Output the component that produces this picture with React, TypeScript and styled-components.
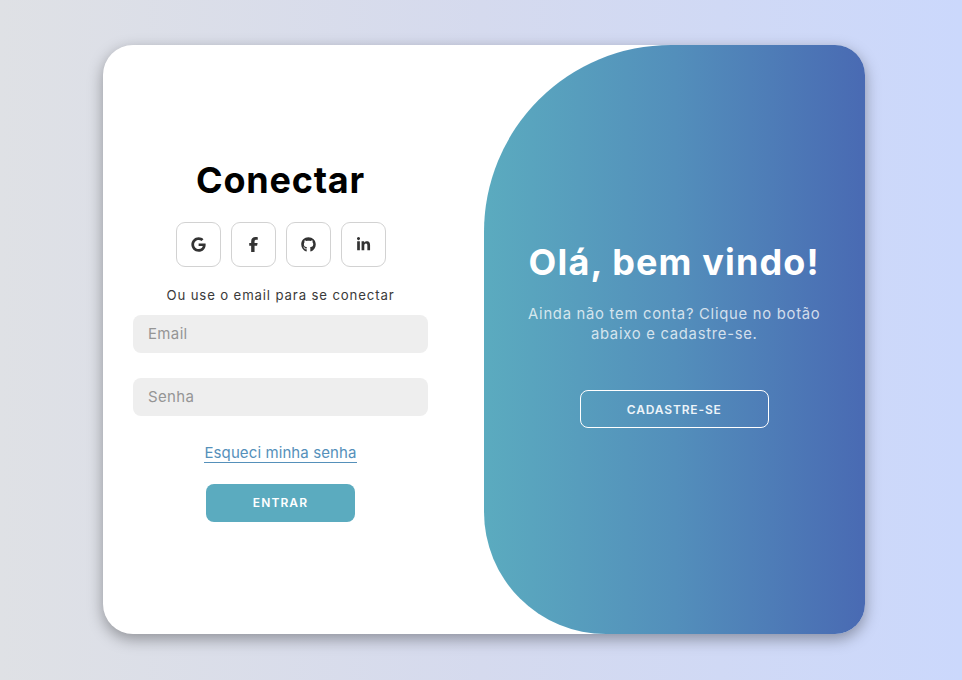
import React from "react";
import styled, { createGlobalStyle } from "styled-components";
import { FaFacebookF, FaGithub, FaGoogle, FaLinkedinIn } from "react-icons/fa6";

const GlobalStyle = createGlobalStyle`
  *, *::before, *::after { box-sizing: border-box; margin: 0; padding: 0; }
  body { font-family: "Inter", "Liberation Sans", sans-serif; }
`;

const Page = styled.main`
  display: flex;
  justify-content: center;
  height: 680px;
  padding: 44.5px 0 46px 5px;
  background: linear-gradient(to right, #dfe1e5, #d5daee 50%, #cbd8fc);
  overflow: hidden;
`;

const Card = styled.div`
  display: grid;
  grid-template-columns: 1fr 1fr;
  width: 762px;
  height: 589.5px;
  background: #fff;
  border-radius: 30px;
  box-shadow: 0 5px 15px rgba(0, 0, 0, 0.35);
  overflow: hidden;
`;

const SignIn = styled.form`
  display: flex;
  flex-direction: column;
  align-items: center;
  padding: 113.5px 56px 0 30.5px;
`;

const Title = styled.h1<{ $spacing: string }>`
  font-size: 36px;
  line-height: 44px;
  font-weight: 700;
  letter-spacing: ${(p) => p.$spacing};
  white-space: nowrap;
`;

const Socials = styled.div`
  display: flex;
  gap: 10px;
  margin-top: 19.5px;
`;

const SocialLink = styled.a`
  display: flex;
  align-items: center;
  justify-content: center;
  width: 45px;
  height: 45px;
  border: 1px solid #d2d2d2;
  border-radius: 9px;
  color: #333;
  font-size: 15px;
`;

const Hint = styled.span`
  margin-top: 18px;
  font-size: 13.2px;
  line-height: 20px;
  letter-spacing: 0.86px;
  color: #3a3a3a;
  white-space: nowrap;
`;

const Field = styled.input`
  width: 295px;
  height: 38.5px;
  margin-top: 10px;
  padding: 0 15px;
  border: 0;
  border-radius: 8px;
  background: #eee;
  font: 400 15px "Inter", sans-serif;
  letter-spacing: 0.35px;
  outline: none;

  & + & { margin-top: 24.5px; }
  &::placeholder { color: #959595; }
`;

const Forgot = styled.a`
  margin-top: 27px;
  border-bottom: 1px solid #5590ba;
  color: #5590ba;
  font-size: 15px;
  line-height: 19px;
  letter-spacing: 0.1px;
  white-space: nowrap;
`;

const Button = styled.button<{ $outline?: boolean }>`
  width: ${(p) => (p.$outline ? "188.5px" : "149px")};
  height: 38px;
  margin-top: ${(p) => (p.$outline ? "45.5px" : "20.5px")};
  border: 1px solid ${(p) => (p.$outline ? "#fff" : "transparent")};
  border-radius: 8px;
  background: ${(p) => (p.$outline ? "transparent" : "#5babbf")};
  color: ${(p) => (p.$outline ? "#edf4f9" : "#fff")};
  font: 600 12px "Inter", sans-serif;
  letter-spacing: ${(p) => (p.$outline ? "0.85px" : "1.1px")};
`;

const Welcome = styled.section`
  display: flex;
  flex-direction: column;
  align-items: center;
  padding-top: 195.5px;
  border-radius: 187px 0 0 122px;
  background: linear-gradient(to right, #5babbf, #538fbb 50%, #496ab3);
  color: #fff;
`;

const Message = styled.p`
  margin-top: 19.5px;
  color: rgba(255, 255, 255, 0.76);
  font-size: 14.8px;
  line-height: 20.5px;
  letter-spacing: 0.73px;
  text-align: center;
  white-space: nowrap;
`;

const socials = [
  { label: "Google", Icon: FaGoogle },
  { label: "Facebook", Icon: FaFacebookF },
  { label: "GitHub", Icon: FaGithub },
  { label: "LinkedIn", Icon: FaLinkedinIn },
];

export default function App() {
  return (
    <>
      <GlobalStyle />
      <Page>
        <Card>
          <SignIn>
            <Title $spacing="0.8px">Conectar</Title>
            <Socials>
              {socials.map(({ label, Icon }) => (
                <SocialLink key={label} aria-label={label}>
                  <Icon />
                </SocialLink>
              ))}
            </Socials>
            <Hint>Ou use o email para se conectar</Hint>
            <Field type="email" placeholder="Email" />
            <Field type="password" placeholder="Senha" />
            <Forgot>Esqueci minha senha</Forgot>
            <Button type="button">ENTRAR</Button>
          </SignIn>
          <Welcome>
            <Title $spacing="1.15px">Olá, bem vindo!</Title>
            <Message>
              Ainda não tem conta? Clique no botão
              <br />
              abaixo e cadastre-se.
            </Message>
            <Button type="button" $outline>
              CADASTRE-SE
            </Button>
          </Welcome>
        </Card>
      </Page>
    </>
  );
}
